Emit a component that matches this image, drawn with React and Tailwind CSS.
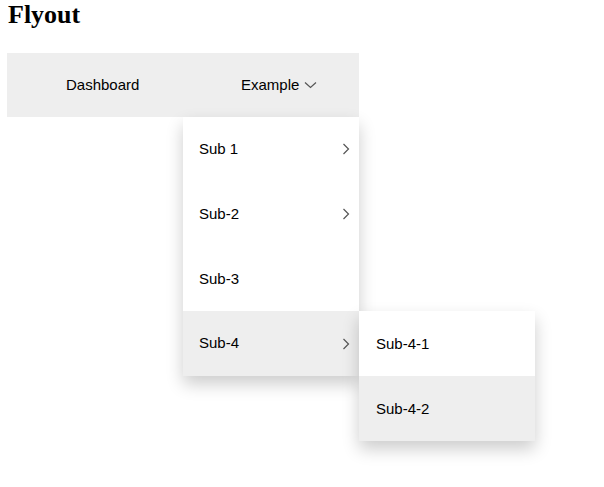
import React from "react";

const ChevronDown = () => (
  <svg width="13" height="8" viewBox="0 0 13 8" className="ml-[5px]" fill="none">
    <path d="M1 1.5 L6.5 6.5 L12 1.5" stroke="#555" strokeWidth="1.2" />
  </svg>
);

const ChevronRight = () => (
  <svg width="8" height="12" viewBox="0 0 8 12" fill="none">
    <path d="M1.5 1 L6.5 6 L1.5 11" stroke="#555" strokeWidth="1.2" />
  </svg>
);

function Item({ label, arrow, active, children }) {
  return (
    <div className={`relative h-[64.75px] flex items-center justify-between pl-4 pr-[9px] ${active ? "bg-[#eeeeee]" : "bg-white"}`}>
      <span>{label}</span>
      {arrow && <ChevronRight />}
      {children}
    </div>
  );
}

export default function App() {
  return (
    <div className="min-h-[487px] bg-white text-black text-[15px]" style={{ fontFamily: '"Liberation Sans", Arial, sans-serif' }}>
      <h1 className="pl-2 text-[26px] leading-[30px] font-bold" style={{ fontFamily: '"Liberation Serif", "Times New Roman", serif' }}>
        Flyout
      </h1>
      <div className="ml-[7px] mt-[23px] w-[352px] h-[64px] bg-[#eeeeee] flex">
        <div className="w-[176px] flex items-center pl-[59px]">Dashboard</div>
        <div className="relative w-[176px] flex items-center pl-[58px]">
          <span>Example</span>
          <ChevronDown />
          <div className="absolute left-0 top-full w-[176px] bg-white shadow-[0_8px_16px_0_rgba(0,0,0,0.2)] z-10">
            <Item label="Sub 1" arrow />
            <Item label="Sub-2" arrow />
            <Item label="Sub-3" />
            <Item label="Sub-4" arrow active>
              <div className="absolute left-full top-0 w-[176px] bg-white shadow-[0_8px_16px_0_rgba(0,0,0,0.2)]">
                <div className="h-[65px] flex items-center pl-[17px] bg-white">Sub-4-1</div>
                <div className="h-[65px] flex items-center pl-[17px] bg-[#eeeeee]">Sub-4-2</div>
              </div>
            </Item>
          </div>
        </div>
      </div>
    </div>
  );
}
